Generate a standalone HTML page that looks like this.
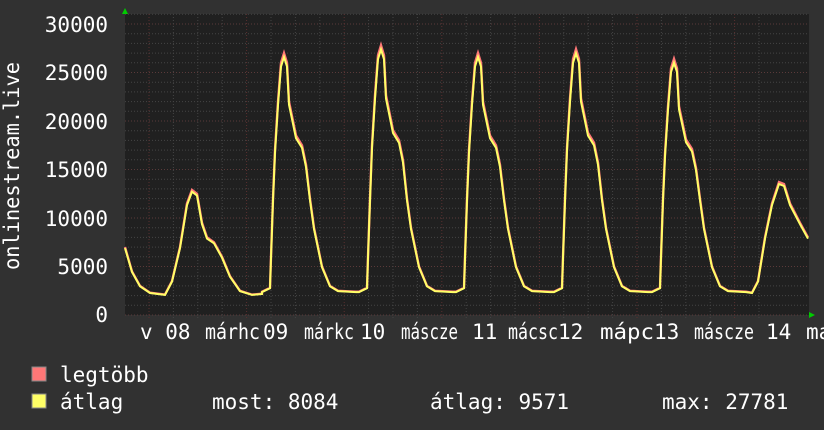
<!DOCTYPE html><html><head><meta charset="utf-8"><style>
body{margin:0;width:824px;height:430px;background:#313131;overflow:hidden;font-family:"DejaVu Sans Mono","Liberation Mono",monospace;color:#fff}
svg{position:absolute;left:0;top:0}
text{font-family:"DejaVu Sans Mono","Liberation Mono",monospace;fill:#fff;font-size:21px}
</style></head><body>
<svg id="s" width="824" height="430" xmlns="http://www.w3.org/2000/svg">
<rect x="125" y="14" width="684" height="301" fill="#202020"/>
<g id="grid"></g>
<path id="maxl" fill="none" stroke="#ff7777" stroke-width="2.4"/>
<path id="avgl" fill="none" stroke="#ffff66" stroke-width="2"/>
<polygon points="122,14 128,14 125,8" fill="#00cc00"/>
<polygon points="809,312 809,318 815,315" fill="#00cc00"/>
<g text-anchor="end">
<text x="108" y="32">30000</text><text x="108" y="80">25000</text><text x="108" y="129">20000</text><text x="108" y="177">15000</text><text x="108" y="226">10000</text><text x="108" y="274">5000</text><text x="108" y="322">0</text>
</g>
<text transform="translate(19,166) rotate(-90)" text-anchor="middle" textLength="208" lengthAdjust="spacingAndGlyphs">onlinestream.live</text>
<g>
<text x="140" y="339">v 08</text>
<text x="205" y="339" textLength="55" lengthAdjust="spacingAndGlyphs">márhc</text><text x="263" y="339">09</text>
<text x="304" y="339" textLength="50" lengthAdjust="spacingAndGlyphs">márkc</text><text x="360" y="339">10</text>
<text x="401" y="339" textLength="57" lengthAdjust="spacingAndGlyphs">máscze</text><text x="472" y="339">11</text>
<text x="508" y="339" textLength="50" lengthAdjust="spacingAndGlyphs">mácsc</text><text x="558" y="339">12</text>
<text x="600" y="339" textLength="54" lengthAdjust="spacingAndGlyphs">mápc</text><text x="654" y="339">13</text>
<text x="694" y="339" textLength="60" lengthAdjust="spacingAndGlyphs">máscze</text><text x="766" y="339">14</text>
<text x="806" y="339">ma</text>
</g>
<rect x="32" y="367" width="14" height="14" fill="#ff7777" stroke="#888"/>
<rect x="32" y="394" width="14" height="14" fill="#ffff66" stroke="#888"/>
<text x="60" y="382">legtöbb</text>
<text x="60" y="409">átlag</text>
<text x="212" y="409">most: 8084</text>
<text x="430" y="409">átlag: 9571</text>
<text x="662" y="409">max: 27781</text>
</svg>
<script>
var g=document.getElementById('grid'),h='';
for(var y=315;y>14;y-=9.7){var maj=Math.abs(((315-y)/48.5)-Math.round((315-y)/48.5))<0.05;
h+='<line x1="125" x2="809" y1="'+y.toFixed(1)+'" y2="'+y.toFixed(1)+'" stroke="'+(maj?'#5a3a3a':'#444')+'" stroke-dasharray="1,2"/>';}
for(var i=0;i<30;i++){var x=149+i*24.4-97.6; if(x<125||x>809)continue;var maj=((i%4)==0);
h+='<line y1="14" y2="318" x1="'+x.toFixed(1)+'" x2="'+x.toFixed(1)+'" stroke="'+(maj?'#5a3030':'#444')+'" stroke-dasharray="1,2"/>';}
g.innerHTML=h;
function Y(v){return 315-v*0.0097;}
var tpl=[[-22,2400],[-14,2800],[-13,6000],[-11,12000],[-9,17000],[-6,22000],[-3,26000],[0,27000],[3,26000],[5,22000],[8,20500],[12,18500],[18,17500],[22,15500],[26,12000],[30,9000],[38,5000],[46,3000],[54,2500],[72,2400]];
var peaks=[[284,27000],[381,27800],[478,27000],[576,27400],[674,26400]];
var pts=[[125,7000],[132,4500],[140,3000],[150,2300],[165,2100],[172,3500],[180,7000],[187,11500],[192,12900],[197,12500],[202,9500],[207,8000],[214,7500],[222,6000],[230,4000],[240,2500],[252,2100],[262,2200]];
peaks.forEach(function(p){tpl.forEach(function(t){pts.push([p[0]+t[0],t[1]*(t[1]>15000?p[1]/27000:1)]);});});
pts=pts.filter(function(a){return a[0]<752});
pts.push([752,2300],[758,3500],[765,8000],[772,11500],[779,13700],[784,13500],[790,11500],[800,9500],[808,8000]);
pts.sort(function(a,b){return a[0]-b[0]});
var d='',d2='';pts.forEach(function(a,i){d+=(i?'L':'M')+a[0]+','+Y(a[1]).toFixed(1);d2+=(i?'L':'M')+a[0]+','+Y(a[1]*0.985).toFixed(1);});
document.getElementById('maxl').setAttribute('d',d);
document.getElementById('avgl').setAttribute('d',d2);
</script>
</body></html>
